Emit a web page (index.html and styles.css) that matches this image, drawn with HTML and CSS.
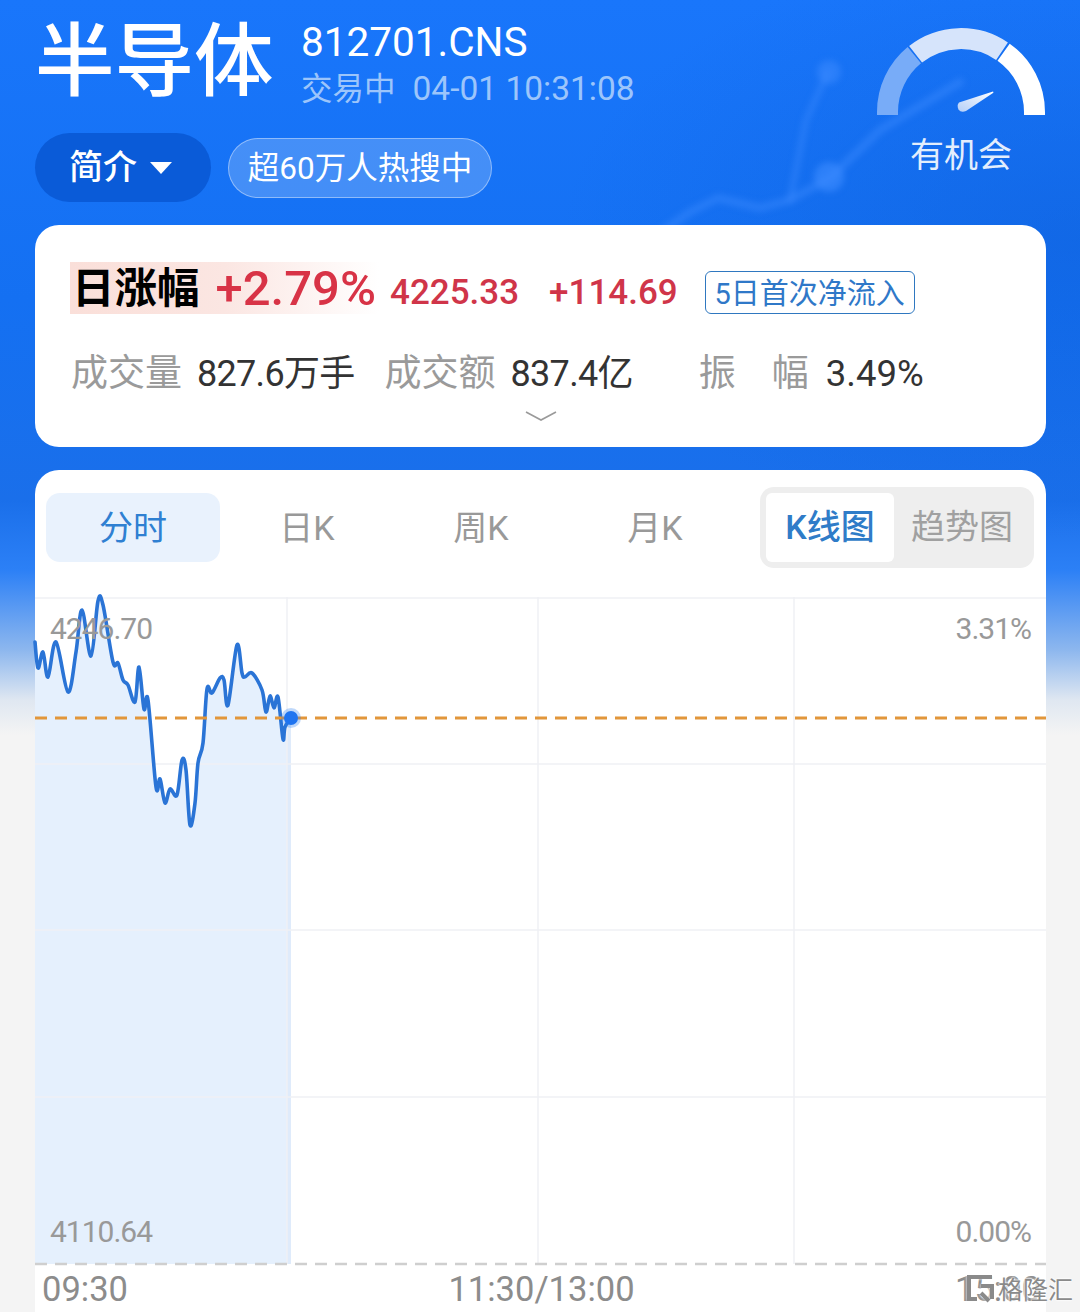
FILE: index.html
```html
<!DOCTYPE html>
<html lang="zh-CN">
<head>
    <meta charset="UTF-8">
    <meta name="viewport" content="width=device-width, initial-scale=1.0">
    <link rel="stylesheet" href="styles.css">
    <title>半导体 812701.CNS</title>
</head>
<body>

<div class="page">
    <!-- faint chart drawn behind the header -->
    <svg class="header-decor" width="1080" height="240" viewBox="0 0 1080 240">
        <g fill="none" stroke="#3d8cff" stroke-linecap="round" stroke-linejoin="round">
            <polyline points="650,240 690,212 718,198 760,208 790,200 830,178 880,130 960,82" stroke-width="8" opacity=".45"/>
            <polyline points="790,200 806,120 828,72" stroke-width="6" opacity=".45"/>
        </g>
        <circle cx="829" cy="72" r="12" fill="#3d8cff" opacity=".5"/>
        <circle cx="829" cy="177" r="15" fill="#3d8cff" opacity=".6"/>
    </svg>

    <header class="header">
        <div class="header-left">
            <div class="title-row">
                <h1 class="title">半导体</h1>
                <div class="title-meta">
                    <div class="code">812701.CNS</div>
                    <div class="status"><span>交易中</span><span class="status-time">04-01 10:31:08</span></div>
                </div>
            </div>
            <div class="tag-row">
                <div class="intro-btn">简介<span class="caret"></span></div>
                <div class="hot-tag">超60万人热搜中</div>
            </div>
        </div>
        <div class="gauge">
            <svg width="170" height="88" viewBox="876 27 170 88">
                <defs>
                    <linearGradient id="needle" x1="0" y1="1" x2="1" y2="0">
                        <stop offset="0" stop-color="#b4cff8"/>
                        <stop offset="1" stop-color="#ffffff"/>
                    </linearGradient>
                </defs>
                <path d="M887.5 120 V112 A73.5 73.5 0 0 1 914.3 55.2" fill="none" stroke="#78acf8" stroke-width="21"/>
                <path d="M915.6 54.2 A73.5 73.5 0 0 1 1002 51.2" fill="none" stroke="#d6e4fb" stroke-width="21"/>
                <path d="M1003.6 52.2 A73.5 73.5 0 0 1 1034.5 112 V120" fill="none" stroke="#ffffff" stroke-width="21"/>
                <path d="M959 102.5 L993 91.5 Q994 92 993 93 L966 111 Q961 113 958.5 109.5 Q956.5 105 959 102.5 Z" fill="url(#needle)"/>
            </svg>
            <div class="gauge-label">有机会</div>
        </div>
    </header>

    <section class="card summary">
        <div class="summary-top">
            <div class="rise-box">
                <span class="rise-label">日涨幅</span>
                <span class="rise-pct">+2.79%</span>
            </div>
            <span class="rise-num price">4225.33</span>
            <span class="rise-num change">+114.69</span>
            <span class="flow-tag">5日首次净流入</span>
        </div>
        <div class="summary-stats">
            <span class="stat-name">成交量</span>
            <span class="stat-val vol">827.6万手</span>
            <span class="stat-name">成交额</span>
            <span class="stat-val amount">837.4亿</span>
            <span class="stat-name spread"><span>振</span><span>幅</span></span>
            <span class="stat-val range">3.49%</span>
        </div>
        <svg class="chevron" width="32" height="14" viewBox="0 0 32 14">
            <polyline points="1,2 16,10 31,2" fill="none" stroke="#9a9a9a" stroke-width="1.6"/>
        </svg>
    </section>

    <section class="card chart-card">
        <div class="tabs">
            <div class="tab active">分时</div>
            <div class="tab">日K</div>
            <div class="tab">周K</div>
            <div class="tab">月K</div>
            <div class="switch">
                <div class="switch-item on">K线图</div>
                <div class="switch-item">趋势图</div>
            </div>
        </div>

        <div class="chart">
            <svg class="chart-svg" width="1011" height="667" viewBox="35 597 1011 667">
                <path id="priceArea" fill="#e5f0fd"/>
                <rect x="287" y="718" width="4" height="546" fill="#dfebfb"/>
                <g stroke="#eff1f4" stroke-width="1.5">
                    <line x1="35" y1="598" x2="1046" y2="598"/>
                    <line x1="35" y1="764" x2="1046" y2="764"/>
                    <line x1="35" y1="930" x2="1046" y2="930"/>
                    <line x1="35" y1="1097" x2="1046" y2="1097"/>
                    <line x1="287" y1="597" x2="287" y2="1264"/>
                    <line x1="538" y1="597" x2="538" y2="1264"/>
                    <line x1="794" y1="597" x2="794" y2="1264"/>
                </g>
                <path id="priceLine" fill="none" stroke="#2a74d6" stroke-width="3.6" stroke-linejoin="round" stroke-linecap="round"/>
                <line x1="35" y1="718" x2="1046" y2="718" stroke="#e2963a" stroke-width="3" stroke-dasharray="12 8"/>
                <line x1="35" y1="1264" x2="1046" y2="1264" stroke="#cfcfcf" stroke-width="2.5" stroke-dasharray="12 8"/>
                <circle cx="291" cy="718" r="10" fill="#2a7df0" fill-opacity=".3"/>
                <circle cx="291" cy="718" r="7" fill="#1f74f0"/>
            </svg>
            <span class="axis-label top left">4246.70</span>
            <span class="axis-label top right">3.31%</span>
            <span class="axis-label bottom left">4110.64</span>
            <span class="axis-label bottom right">0.00%</span>
        </div>

        <div class="time-axis">
            <span>09:30</span>
            <span>11:30/13:00</span>
            <span>15:00</span>
        </div>
    </section>

    <div class="watermark">
        <svg width="30" height="30" viewBox="0 0 30 30">
            <path d="M27 4 H4 V26 H12 M16 13 H27 V26 M16 20 L24 28" fill="none" stroke="#8a8a8a" stroke-width="4"/>
        </svg>
        <span>格隆汇</span>
    </div>
</div>

<script src="chart.js"></script>
</body>
</html>
```

FILE: styles.css
```css
* {
    box-sizing: border-box;
}

body {
    margin: 0;
    font-family: Roboto, "Noto Sans CJK SC", sans-serif;
}

.page {
    position: relative;
    width: 1080px;
    height: 1312px;
    overflow: hidden;
    padding: 0 34px 0 35px;
    background:
        radial-gradient(ellipse 520px 300px at 1080px 240px, rgba(12, 90, 210, 0.4), rgba(12, 90, 210, 0)),
        linear-gradient(180deg, #1976fb 0, #1470f2 300px, #1a6fea 500px, #2c80f6 570px, #8db7ee 650px, #dfe7f1 700px, #f4f4f4 735px);
}

.header-decor {
    position: absolute;
    left: 0;
    top: 0;
    filter: blur(3px);
}

.header {
    position: relative;
    display: flex;
    justify-content: space-between;
    height: 225px;
}

.title-row {
    display: flex;
    height: 133px;
}

.title {
    margin: 16px 0 0 0;
    font-size: 79.5px;
    line-height: 92px;
    font-weight: 500;
    color: #fff;
}

.title-meta {
    margin: 19px 0 0 27.5px;
}

.code {
    font-size: 40.5px;
    line-height: 46px;
    color: #fff;
}

.status {
    display: flex;
    align-items: baseline;
    gap: 17px;
    font-size: 31.5px;
    line-height: 47px;
    color: #9cc5fb;
}

.status-time {
    font-size: 33.5px;
}

.tag-row {
    display: flex;
    align-items: center;
    gap: 17px;
}

.intro-btn {
    display: flex;
    align-items: center;
    justify-content: center;
    width: 176px;
    height: 69px;
    padding: 0 5px 6px 0;
    border-radius: 35px;
    background: #0a5bd8;
    color: #fff;
    font-size: 34px;
    font-weight: 500;
}

.caret {
    width: 0;
    height: 0;
    margin: 7px 0 0 13px;
    border-left: 11px solid transparent;
    border-right: 11px solid transparent;
    border-top: 12px solid #fff;
}

.hot-tag {
    display: flex;
    align-items: center;
    justify-content: center;
    width: 264px;
    height: 60px;
    padding-bottom: 6px;
    border: 1px solid rgba(255, 255, 255, 0.4);
    border-radius: 30px;
    background: rgba(255, 255, 255, 0.2);
    color: #fff;
    font-size: 31.5px;
}

.gauge {
    display: flex;
    flex-direction: column;
    align-items: center;
    padding-top: 27px;
}

.gauge svg {
    display: block;
}

.gauge-label {
    margin-top: 18px;
    font-size: 34px;
    line-height: 44px;
    color: #e3eefd;
}

.card {
    position: relative;
    background: #fff;
    border-radius: 24px;
}

.summary {
    height: 222px;
    padding: 37px 0 0 36px;
    margin-bottom: 23px;
}

.summary-top {
    display: flex;
    align-items: center;
    height: 52px;
}

.rise-box {
    display: flex;
    align-items: center;
    width: 309px;
    height: 52px;
    margin-left: -1px;
    padding-left: 2px;
    background: linear-gradient(90deg, #fadfd9 0, #fbe6e2 50%, #ffffff 100%);
}

.rise-label {
    padding-bottom: 8px;
    font-size: 42.5px;
    font-weight: 700;
    color: #000;
}

.rise-pct {
    margin-left: 16px;
    font-size: 49px;
    font-weight: 500;
    color: #d83346;
}

.rise-num {
    padding-top: 8px;
    font-size: 35px;
    font-weight: 500;
    color: #d03549;
}

.price {
    margin-left: 11px;
}

.change {
    margin-left: 30px;
}

.flow-tag {
    display: flex;
    align-items: center;
    justify-content: center;
    width: 210px;
    height: 43px;
    margin: 9px 0 0 27px;
    padding-bottom: 4px;
    border: 1px solid #2f78c0;
    border-radius: 6px;
    color: #2f78c8;
    font-size: 29px;
}

.summary-stats {
    display: flex;
    align-items: baseline;
    height: 52px;
    margin-top: 29px;
}

.stat-name {
    font-size: 37px;
    color: #9a9a9a;
}

.stat-val {
    margin-left: 15px;
    font-size: 36px;
    color: #333;
}

.vol {
    margin-right: 30px;
    letter-spacing: -0.7px;
}

.amount {
    margin-right: 66px;
    letter-spacing: -0.7px;
}

.range {
    margin-left: 17px;
    font-size: 36.5px;
}

.spread {
    display: flex;
    justify-content: space-between;
    width: 110px;
}

.chevron {
    position: absolute;
    left: 490px;
    top: 185px;
}

.chart-card {
    height: 900px;
}

.tabs {
    display: flex;
    align-items: flex-start;
    height: 127px;
    padding: 17px 12px 0 11px;
}

.tab {
    width: 174px;
    height: 69px;
    margin-top: 6px;
    border-radius: 14px;
    color: #999;
    font-size: 34px;
    line-height: 71px;
    text-align: center;
}

.tab.active {
    background: #e9f2fd;
    color: #2f80d2;
}

.switch {
    display: flex;
    width: 274px;
    height: 81px;
    margin-left: auto;
    padding: 6px 0 6px 6px;
    border-radius: 14px;
    background: #eee;
}

.switch-item {
    width: 128px;
    border-radius: 6px;
    color: #a0a0a0;
    font-size: 34px;
    line-height: 69px;
    text-align: center;
}

.switch-item:last-child {
    flex: 1;
    width: auto;
    padding-right: 4px;
}

.switch-item.on {
    background: #fff;
    color: #2f7cc8;
    font-weight: 500;
}

.chart {
    position: relative;
    height: 667px;
}

.chart-svg {
    display: block;
    overflow: visible;
}

.axis-label {
    position: absolute;
    font-size: 30px;
    line-height: 36px;
    letter-spacing: -1px;
    color: #999;
}

.axis-label.top {
    top: 14px;
}

.axis-label.bottom {
    bottom: 14px;
}

.axis-label.left {
    left: 15px;
}

.axis-label.right {
    right: 15px;
}

.time-axis {
    display: flex;
    justify-content: space-between;
    padding: 5px 5px 0 7px;
    font-size: 34.5px;
    line-height: 40px;
    color: #8c8c8c;
}

.watermark {
    position: absolute;
    right: 7px;
    bottom: 6px;
    display: flex;
    align-items: center;
    gap: 3px;
    color: #8a8a8a;
    font-size: 25px;
    text-shadow: 0 0 2px #fff, 0 0 2px #fff, 0 0 3px #fff;
}

.watermark svg {
    filter: drop-shadow(0 0 1.5px #fff);
}
```

FILE: chart.js
```js
// price points read off the screen, in page pixels
var points = [
    [35, 642], [38, 668], [43, 652], [48, 677], [56, 642], [68, 692], [76, 652], [82, 610],
    [91, 656], [98, 601], [103, 605], [113, 662], [118, 663], [123, 680], [128, 685], [135, 702],
    [139, 667], [144, 709], [148, 700], [156, 787], [160, 779], [165, 803], [170, 789], [177, 795],
    [182, 760], [186, 770], [190, 825], [195, 803], [198, 763], [203, 743], [207, 689], [212, 693],
    [220, 678], [224, 680], [228, 705], [237, 645], [242, 673], [245, 677], [252, 673], [262, 690],
    [266, 712], [270, 696], [274, 708], [278, 697], [283, 739], [285, 727], [291, 718]
];

// smooth the points with a catmull-rom curve
function buildPath(pts) {
    var d = "M" + pts[0][0] + " " + pts[0][1];
    for (var i = 0; i < pts.length - 1; i++) {
        var p0 = pts[i - 1] || pts[i];
        var p1 = pts[i];
        var p2 = pts[i + 1];
        var p3 = pts[i + 2] || p2;
        var c1x = p1[0] + (p2[0] - p0[0]) / 6;
        var c1y = p1[1] + (p2[1] - p0[1]) / 6;
        var c2x = p2[0] - (p3[0] - p1[0]) / 6;
        var c2y = p2[1] - (p3[1] - p1[1]) / 6;
        d += " C" + c1x + " " + c1y + " " + c2x + " " + c2y + " " + p2[0] + " " + p2[1];
    }
    return d;
}

var line = buildPath(points);
document.getElementById("priceLine").setAttribute("d", line);
document.getElementById("priceArea").setAttribute("d", line + " L291 1264 L35 1264 Z");
```
